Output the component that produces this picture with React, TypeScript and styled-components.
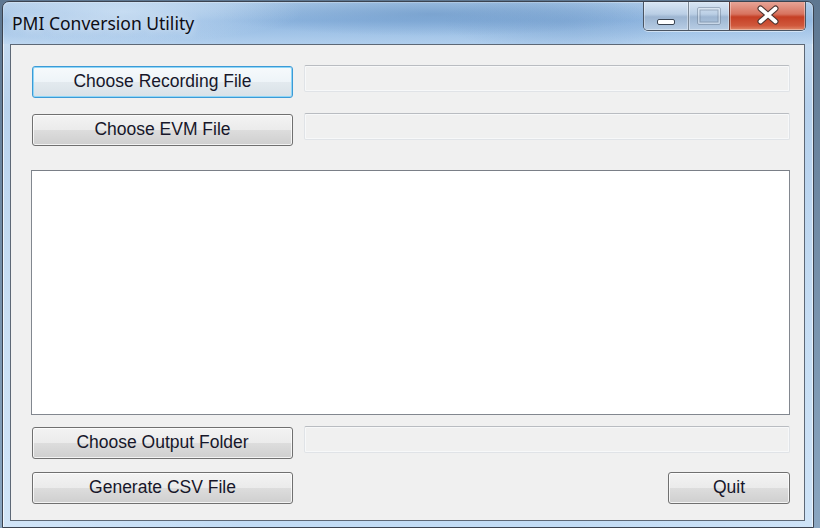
import * as React from 'react';
import styled, { createGlobalStyle } from 'styled-components';

const GlobalStyle = createGlobalStyle`
  html, body {
    margin: 0;
    padding: 0;
    background: #6d8aa5;
  }
  #root {
    width: 820px;
    height: 528px;
  }
`;

const Desktop = styled.div`
  box-sizing: border-box;
  width: 820px;
  height: 528px;
  padding: 1px 6px 0 2px;
  background: linear-gradient(180deg, #5e7791 0%, #8aa6c1 100%);
  overflow: hidden;
`;

const Window = styled.div`
  box-sizing: border-box;
  width: 812px;
  height: 527px;
  display: flex;
  flex-direction: column;
  border: 1px solid #3b4350;
  border-radius: 7px 7px 0 0;
  background:
    linear-gradient(90deg, rgba(255, 255, 255, 0.25) 0%, rgba(255, 255, 255, 0) 30%, rgba(255, 255, 255, 0) 70%, rgba(255, 255, 255, 0.2) 100%),
    linear-gradient(180deg, #bcd5ee 0%, #a3c5e8 20%, #b8d5f1 60%, #c2dcf5 100%);
  box-shadow: inset 1px 1px 0 rgba(255, 255, 255, 0.7), inset -1px 0 0 rgba(255, 255, 255, 0.6);
  overflow: hidden;
`;

const TitleBar = styled.div`
  height: 42px;
  display: flex;
  align-items: flex-start;
  padding-left: 9px;
  background:
    radial-gradient(ellipse 180px 30px at 120px 10px, rgba(215, 232, 248, 0.7), rgba(215, 232, 248, 0)),
    radial-gradient(ellipse 220px 22px at 430px 12px, rgba(95, 140, 190, 0.5), rgba(95, 140, 190, 0)),
    radial-gradient(ellipse 120px 30px at 560px 20px, rgba(120, 160, 205, 0.45), rgba(120, 160, 205, 0)),
    linear-gradient(180deg, rgba(130, 172, 215, 0.35) 0%, rgba(110, 160, 215, 0.55) 45%, rgba(170, 205, 240, 0.25) 100%);
`;

const Title = styled.div`
  margin-top: 9px;
  font-family: 'Noto Sans', 'DejaVu Sans', sans-serif;
  font-size: 17.5px;
  line-height: 24px;
  color: #0d0d14;
  text-shadow: 0 0 8px rgba(255, 255, 255, 0.9);
`;

const Captions = styled.div`
  margin-left: auto;
  margin-right: 7px;
  margin-top: -1px;
  display: flex;
  height: 29px;
  border: 1px solid #4a5462;
  border-top: none;
  border-radius: 0 0 5px 5px;
  overflow: hidden;
  box-shadow: 0 1px 0 rgba(255, 255, 255, 0.5);
`;

const CaptionButton = styled.div<{ $w: number; $close?: boolean }>`
  width: ${p => p.$w}px;
  display: flex;
  align-items: center;
  justify-content: center;
  border-left: ${p => (p.$close ? '1px solid #6b3a32' : '1px solid #7b8896')};
  &:first-child {
    border-left: none;
  }
  background: ${p =>
    p.$close
      ? 'linear-gradient(180deg, #e9a89b 0%, #d7735f 45%, #c53f25 55%, #d0583c 85%, #e08a6b 100%)'
      : 'linear-gradient(180deg, rgba(235,242,250,0.75) 0%, rgba(200,214,230,0.7) 45%, rgba(160,180,204,0.75) 55%, rgba(190,208,228,0.8) 100%)'};
  box-shadow: inset 0 0 0 1px rgba(255, 255, 255, 0.35);
`;

const Client = styled.div`
  flex: 1;
  margin: 0 8px 6px 7px;
  border: 1px solid #5d6876;
  background: #f0f0f0;
  padding: 21px 14px 15px 21px;
  display: flex;
  flex-direction: column;
`;

const Row = styled.div<{ $gap: number }>`
  display: flex;
  align-items: flex-start;
  gap: 11px;
  margin-top: ${p => p.$gap}px;
`;

const Button = styled.button<{ $w?: number; $focused?: boolean }>`
  box-sizing: border-box;
  flex: none;
  width: ${p => p.$w ?? 261}px;
  height: 32px;
  padding: 0 0 1px;
  border-radius: 3px;
  border: 1px solid ${p => (p.$focused ? '#3c9ad6' : '#707070')};
  background: ${p =>
    p.$focused
      ? 'linear-gradient(180deg, #f6fafc 0%, #eef4f8 50%, #e3eaef 50%, #d9e1e7 100%)'
      : 'linear-gradient(180deg, #f3f3f3 0%, #ebebeb 50%, #dddddd 50%, #cfcfcf 100%)'};
  box-shadow: inset 0 0 0 1px ${p => (p.$focused ? '#8fd6f7' : 'rgba(255, 255, 255, 0.75)')};
  font-family: 'Liberation Sans', Arial, sans-serif;
  font-size: 17.5px;
  color: #17172a;
  cursor: default;
`;

const Field = styled.div`
  box-sizing: border-box;
  flex: 1;
  height: 27px;
  margin-top: -1px;
  border: 1px solid #e0e3e7;
  border-top-color: #b9bcc1;
  border-radius: 2px;
  background: #f0f0f0;
  box-shadow: inset 0 0 0 1px #f7f8f9;
`;

const ListBox = styled.div`
  box-sizing: border-box;
  height: 245px;
  margin-top: 24px;
  margin-left: -1px;
  border: 1px solid #82878f;
  border-top-color: #7a7f87;
  background: #ffffff;
`;

const Spacer = styled.div`
  flex: 1;
`;

const MinGlyph = () => (
  <svg width="20" height="10" viewBox="0 0 20 10" style={{ marginTop: 13 }}>
    <rect x="1.5" y="2.5" width="17" height="5" rx="1.5" fill="#fff" stroke="#3a4452" />
  </svg>
);

const MaxGlyph = () => (
  <svg width="24" height="18" viewBox="0 0 24 18" style={{ opacity: 0.45 }}>
    <rect x="1.5" y="1.5" width="21" height="15" rx="1" fill="none" stroke="#eef3f8" strokeWidth="3" />
    <rect x="0.5" y="0.5" width="23" height="17" rx="1.5" fill="none" stroke="#66768a" />
    <rect x="3" y="3" width="18" height="12" fill="none" stroke="#66768a" />
  </svg>
);

const CloseGlyph = () => (
  <svg width="24" height="20" viewBox="0 0 24 20" style={{ marginTop: -2 }}>
    <path d="M4.5 3.5 L19.5 16.5 M19.5 3.5 L4.5 16.5" stroke="#4b3431" strokeWidth="6" strokeLinecap="round" />
    <path d="M4.5 3.5 L19.5 16.5 M19.5 3.5 L4.5 16.5" stroke="#ffffff" strokeWidth="3.8" strokeLinecap="round" />
  </svg>
);

const App: React.FC = () => (
  <>
    <GlobalStyle />
    <Desktop>
      <Window>
        <TitleBar>
          <Title>PMI Conversion Utility</Title>
          <Captions>
            <CaptionButton $w={44}>
              <MinGlyph />
            </CaptionButton>
            <CaptionButton $w={40}>
              <MaxGlyph />
            </CaptionButton>
            <CaptionButton $w={75} $close>
              <CloseGlyph />
            </CaptionButton>
          </Captions>
        </TitleBar>
        <Client>
          <Row $gap={0}>
            <Button $focused>Choose Recording File</Button>
            <Field />
          </Row>
          <Row $gap={16}>
            <Button>Choose EVM File</Button>
            <Field />
          </Row>
          <ListBox />
          <Row $gap={12}>
            <Button>Choose Output Folder</Button>
            <Field />
          </Row>
          <Row $gap={13}>
            <Button>Generate CSV File</Button>
            <Spacer />
            <Button $w={122}>Quit</Button>
          </Row>
        </Client>
      </Window>
    </Desktop>
  </>
);

export default App;
